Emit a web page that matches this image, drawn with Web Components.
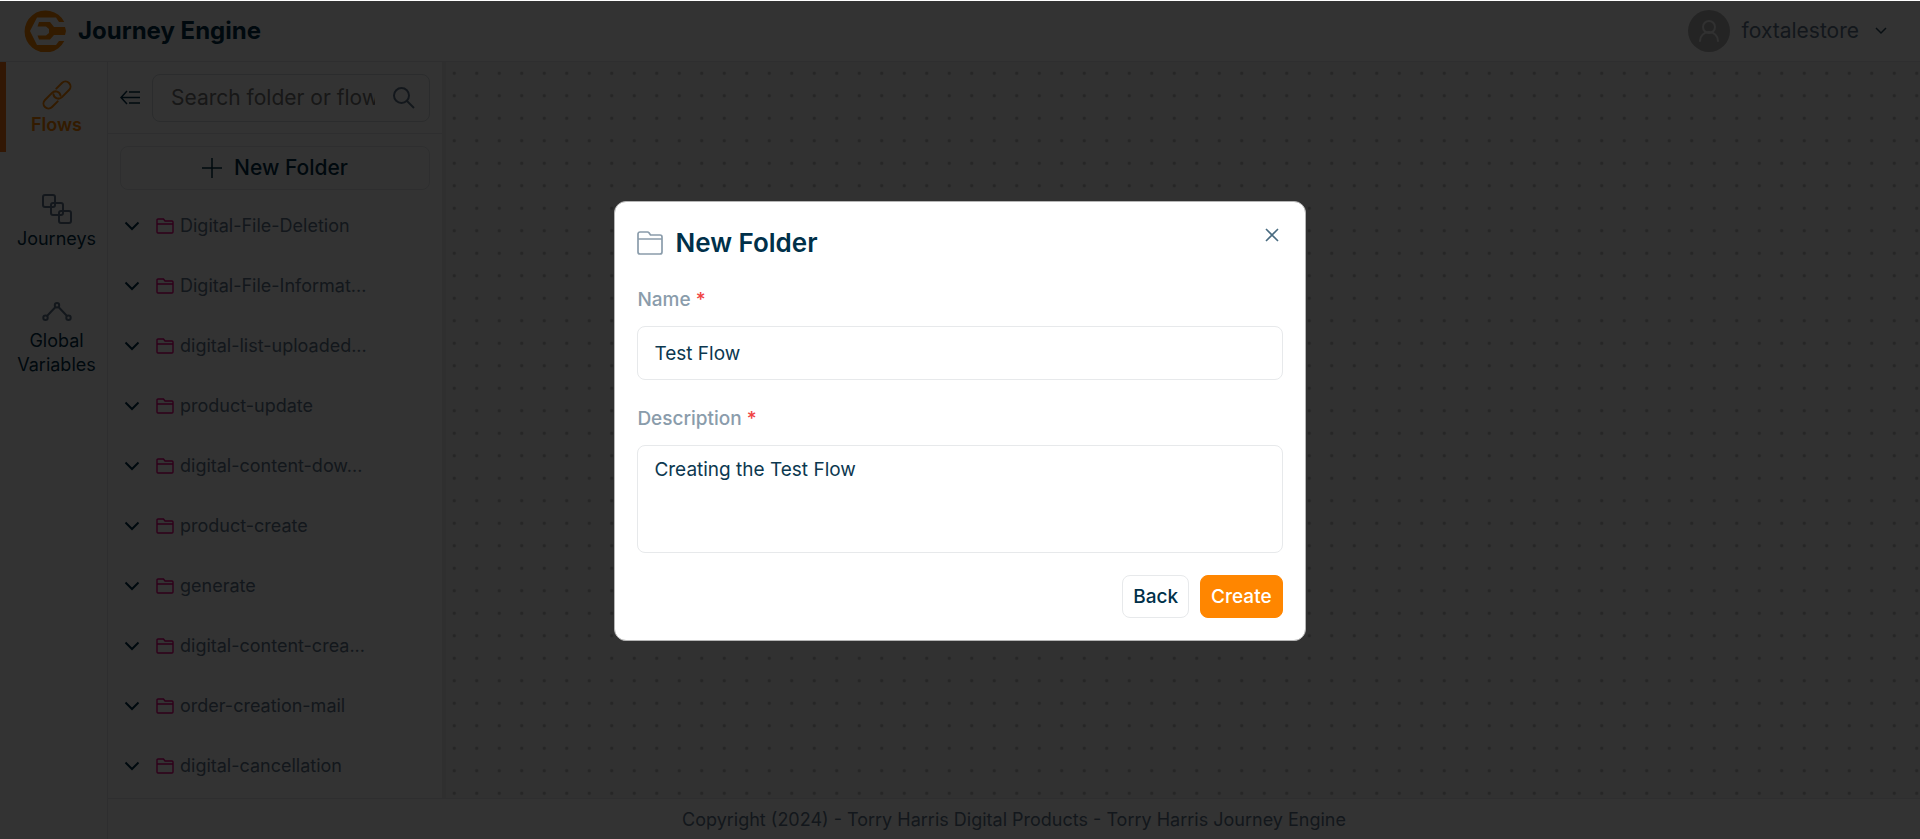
<!DOCTYPE html>
<html lang="en">
<head>
<meta charset="utf-8">
<title>Journey Engine</title>
<style>
  html, body {
    margin: 0;
    height: 100%;
  }
  body {
    font-family: Inter, "Liberation Sans", sans-serif;
    font-size: 18px;
    line-height: 24px;
    color: #003049;
    background: #fff;
    overflow: hidden;
  }
</style>
</head>
<body>
<journey-app>
  <app-header slot="header" user="foxtalestore">Journey Engine</app-header>
  <nav-item slot="nav" icon="link" active>Flows</nav-item>
  <nav-item slot="nav" icon="journeys">Journeys</nav-item>
  <nav-item slot="nav" icon="nodes">Global Variables</nav-item>
  <folder-panel slot="panel">
    <folder-row>Digital-File-Deletion</folder-row>
    <folder-row>Digital-File-Informat...</folder-row>
    <folder-row>digital-list-uploaded...</folder-row>
    <folder-row>product-update</folder-row>
    <folder-row>digital-content-dow...</folder-row>
    <folder-row>product-create</folder-row>
    <folder-row>generate</folder-row>
    <folder-row>digital-content-crea...</folder-row>
    <folder-row>order-creation-mail</folder-row>
    <folder-row>digital-cancellation</folder-row>
  </folder-panel>
  <flow-canvas slot="canvas"></flow-canvas>
  <span slot="footer">Copyright (2024) - Torry Harris Digital Products - Torry Harris Journey Engine</span>
</journey-app>
<folder-modal heading="New Folder"></folder-modal>

<script>
const icons = {
  logo: `<svg width="42" height="42" viewBox="0 0 42 42" fill="#ff8600"><path d="M40.300 12A21 21 0 1 0 40.300 31H35L32 35H13L6 21 13 7.500H32L35 12Z"/><path d="M15 12H26L30 17H41L42 21 41 25H30L26 29.500H15L13.500 25.500H22L25 23V19L22 16.500H13.500Z"/></svg>`,
  link: `<svg width="30" height="30" viewBox="-15 -15 30 30" fill="none" stroke="currentColor" stroke-width="2" stroke-linecap="round"><g transform="rotate(-45)"><path id="half" d="M-4 5H-12A5 5 0 0 1-12-5H-2A5 5 0 0 1 2 3"/><path d="M4-5H12A5 5 0 0 1 12 5H2A5 5 0 0 1-2-3"/></g></svg>`,
  journeys: `<svg width="30" height="30" viewBox="0 0 30 30" fill="none" stroke="#60758a" stroke-width="2"><rect x="1" y="1" width="12" height="12" rx="2"/><rect x="9" y="9" width="12" height="12" rx="2"/><rect x="17" y="17" width="12" height="12" rx="2"/></svg>`,
  nodes: `<svg width="30" height="24" viewBox="0 0 30 24" fill="none" stroke="#60758a" stroke-width="2"><circle cx="15" cy="3.200" r="2.200"/><circle cx="3.500" cy="15.800" r="2.200"/><circle cx="26.500" cy="15.800" r="2.200"/><path d="M13.500 5L5 14M16.500 5L25 14"/></svg>`,
  user: `<svg width="42" height="42" viewBox="0 0 42 42" fill="none" stroke="#f2f2f2" stroke-width="2" stroke-linecap="round"><circle cx="21" cy="21" r="21" fill="#b4b4b4" stroke="none"/><circle cx="21" cy="17" r="6"/><path d="M12 31a9 9 0 0 1 18 0"/></svg>`,
  caret: `<svg width="12" height="8" viewBox="0 0 12 8" fill="none" stroke="#2c4a5e" stroke-width="1.500"><path d="M1 1L6 6 11 1"/></svg>`,
  chevron: `<svg width="16" height="10" viewBox="0 0 16 10" fill="none" stroke="#003049" stroke-width="2"><path d="M1.500 1.500L8 8 14.500 1.500"/></svg>`,
  collapse: `<svg width="20" height="16" viewBox="0 0 20 16" fill="none" stroke="#003049" stroke-width="1.500"><path d="M7 1L1 7.500 7 14M1 7.500H20M9 2H20M9 13H20"/></svg>`,
  search: `<svg width="22" height="22" viewBox="0 0 22 22" fill="none" stroke="#60758a" stroke-width="2"><circle cx="8.500" cy="8.500" r="7.500"/><path d="M14 14L21 21"/></svg>`,
  plus: `<svg width="20" height="20" viewBox="0 0 20 20" fill="none" stroke="#003049" stroke-width="1.500"><path d="M10 0V20M0 10H20"/></svg>`,
  folder: `<svg width="18" height="16" viewBox="0 0 18 16" fill="none" stroke="#e6007e" stroke-width="1.400"><path d="M1 2a1 1 0 0 1 1-1H7.500L9 3H16a1 1 0 0 1 1 1V14a1 1 0 0 1-1 1H2a1 1 0 0 1-1-1ZM1 6H17"/></svg>`,
  folderLarge: `<svg width="26" height="24" viewBox="0 0 26 24" fill="none" stroke="#8a9cab" stroke-width="1.700"><path d="M1 3a2 2 0 0 1 2-2H10.500a2 2 0 0 1 1.500 .700L13.500 4H23a2 2 0 0 1 2 2V21a2 2 0 0 1-2 2H3a2 2 0 0 1-2-2ZM1 8H25"/></svg>`,
  close: `<svg width="14" height="14" viewBox="0 0 14 14" fill="none" stroke="#496b80" stroke-width="1.600"><path d="M1 1L13 13M13 1L1 13"/></svg>`
}

// Base: every element renders its styles and markup in an open shadow root
class BaseElement extends HTMLElement {
  constructor () {
    super()
    this.attachShadow({ mode: 'open' })
  }

  connectedCallback () {
    this.render()
  }

  render () {
    this.shadowRoot.innerHTML = `
      <style>
        * { box-sizing: border-box; }
        svg { display: block; flex: none; }
        button { font: inherit; color: inherit; background: none; border: 0; padding: 0; margin: 0; cursor: pointer; }
        ${this.constructor.styles}
      </style>
      ${this.template()}
    `
  }
}

// Page grid
class JourneyApp extends BaseElement {
  static styles = `
    :host {
      display: grid;
      box-sizing: border-box;
      height: 100vh;
      padding-top: 1px;
      grid-template-columns: 108px 334px 1fr;
      grid-template-rows: 61px 1fr 41px;
    }
    header { grid-column: 1 / -1; border-bottom: 1px solid #e4e7ea; }
    nav { grid-row: 2 / 4; border-right: 1px solid #e4e7ea; display: flex; flex-direction: column; }
    aside, main { min-height: 0; overflow: hidden; }
    footer {
      grid-column: 2 / 4;
      display: flex;
      align-items: center;
      justify-content: center;
      padding-top: 2px;
      border-top: 1px solid #e4e7ea;
      color: #60758a;
    }
  `

  template () {
    return `
      <header><slot name="header"></slot></header>
      <nav><slot name="nav"></slot></nav>
      <aside><slot name="panel"></slot></aside>
      <main><slot name="canvas"></slot></main>
      <footer><slot name="footer"></slot></footer>
    `
  }
}

class AppHeader extends BaseElement {
  static styles = `
    :host { display: flex; align-items: center; justify-content: space-between; height: 60px; padding: 0 33px 0 24px; }
    .brand, button { display: flex; align-items: center; gap: 12px; }
    h1 { margin: 0; font-size: 24px; line-height: 32px; font-weight: 700; }
    button { font-size: 21px; color: #60758a; }
    button svg:last-child { margin-left: 4px; }
  `

  template () {
    return `
      <div class="brand">${icons.logo}<h1><slot></slot></h1></div>
      <button type="button">${icons.user}<span>${this.getAttribute('user')}</span>${icons.caret}</button>
    `
  }
}

class NavItem extends BaseElement {
  static styles = `
    :host { display: block; margin-bottom: 24px; }
    a {
      display: flex;
      flex-direction: column;
      align-items: center;
      gap: 3px;
      min-height: 84px;
      padding: 18px 6px 0 12px;
      color: #003049;
      text-align: center;
      text-decoration: none;
    }
    :host([active]) a { min-height: 90px; color: #ff8600; font-weight: 600; border-left: 6px solid #f97316; padding-left: 6px; }
  `

  template () {
    return `<a href="#">${icons[this.getAttribute('icon')]}<span><slot></slot></span></a>`
  }
}

class FolderPanel extends BaseElement {
  static styles = `
    :host { display: block; }
    .tools { display: flex; align-items: center; gap: 12px; height: 72px; padding: 0 12px; border-bottom: 1px solid #e4e7ea; }
    .search {
      display: flex;
      align-items: center;
      flex: 1;
      min-width: 0;
      height: 48px;
      padding: 0 14px 0 18px;
      gap: 18px;
      border: 1px solid #d5dade;
      border-radius: 8px;
    }
    input { flex: 1; min-width: 0; padding: 0; border: 0; outline: 0; font: inherit; font-size: 21px; background: none; }
    input::placeholder { color: #757575; opacity: 1; }
    .new {
      display: flex;
      align-items: center;
      justify-content: center;
      gap: 12px;
      width: calc(100% - 24px);
      height: 44px;
      margin: 12px 12px 6px;
      font-size: 21px;
      font-weight: 500;
      border: 1px solid #e4e7ea;
      border-radius: 8px;
    }
  `

  template () {
    return `
      <div class="tools">
        <button type="button" aria-label="Collapse">${icons.collapse}</button>
        <label class="search"><input type="text" aria-label="Search" placeholder="Search folder or flow">${icons.search}</label>
      </div>
      <button type="button" class="new">${icons.plus}New Folder</button>
      <slot></slot>
    `
  }
}

class FolderRow extends BaseElement {
  static styles = `
    :host { display: block; }
    button { display: flex; align-items: center; width: 100%; height: 60px; padding-left: 16px; color: #60758a; }
    svg + svg { margin: 0 6px 0 16px; }
  `

  template () {
    return `<button type="button">${icons.chevron}${icons.folder}<slot></slot></button>`
  }
}

// Dotted board with a soft edge next to the panel
class FlowCanvas extends BaseElement {
  static styles = `
    :host { display: block; height: 100%; background: #f3f3f3; border-left: 4px solid #e8e8e8; box-sizing: border-box; }
    svg { width: 100%; height: 100%; }
  `

  template () {
    return `
      <svg aria-hidden="true">
        <pattern id="dots" x="-3" width="22.500" height="22.500" patternUnits="userSpaceOnUse">
          <circle cx="11.250" cy="11.250" r="1.600" fill="#bcbcbc"/>
        </pattern>
        <rect width="100%" height="100%" fill="url(#dots)"/>
      </svg>
    `
  }
}

class FormField extends BaseElement {
  static styles = `
    :host { display: block; font-size: 19px; }
    label { display: block; margin-bottom: 14px; font-weight: 500; color: #8a9cab; }
    i { font-style: normal; color: #f04444; }
    input, textarea {
      display: block;
      width: 100%;
      margin: 0;
      padding: 12px 16px;
      border: 1px solid #e7e9eb;
      border-radius: 8px;
      outline: 0;
      resize: none;
      font: inherit;
      color: #0c3850;
      background: #fff;
    }
    input { height: 54px; }
    textarea { height: 108px; }
  `

  template () {
    const value = this.getAttribute('value')
    return `
      <label for="field">${this.getAttribute('label')} <i>*</i></label>
      ${this.hasAttribute('multiline')
        ? `<textarea id="field" required>${value}</textarea>`
        : `<input id="field" type="text" value="${value}" required>`}
    `
  }
}

class FolderModal extends BaseElement {
  static styles = `
    :host {
      position: fixed;
      inset: 1px 0 0;
      box-sizing: border-box;
      padding-top: 2px;
      display: flex;
      align-items: center;
      justify-content: center;
      background: rgba(0, 0, 0, .8);
    }
    section {
      width: 36%;
      min-width: 480px;
      padding: 22px;
      background: #fff;
      border: 1px solid #b5b5b5;
      border-radius: 12px;
    }
    header { display: flex; align-items: flex-start; justify-content: space-between; margin-bottom: 26px; }
    h2 { display: flex; align-items: center; gap: 12px; margin: 0; font-size: 26px; line-height: 38px; font-weight: 600; }
    header button { padding: 4px; }
    form-field { margin-bottom: 27px; }
    form-field + form-field { margin-bottom: 22px; }
    footer { display: flex; justify-content: flex-end; gap: 11px; }
    footer button { height: 43px; padding: 0 10px; font-size: 19px; font-weight: 500; border: 1px solid #e7e9eb; border-radius: 8px; }
    footer .primary { color: #fff; background: #ff8600; border-color: #ff8600; }
  `

  template () {
    return `
      <section role="dialog" aria-labelledby="title">
        <header>
          <h2 id="title">${icons.folderLarge}${this.getAttribute('heading')}</h2>
          <button type="button" aria-label="Close">${icons.close}</button>
        </header>
        <form-field label="Name" value="Test Flow"></form-field>
        <form-field label="Description" value="Creating the Test Flow" multiline></form-field>
        <footer>
          <button type="button">Back</button>
          <button type="button" class="primary">Create</button>
        </footer>
      </section>
    `
  }
}

customElements.define('journey-app', JourneyApp)
customElements.define('app-header', AppHeader)
customElements.define('nav-item', NavItem)
customElements.define('folder-panel', FolderPanel)
customElements.define('folder-row', FolderRow)
customElements.define('flow-canvas', FlowCanvas)
customElements.define('form-field', FormField)
customElements.define('folder-modal', FolderModal)
</script>
</body>
</html>
